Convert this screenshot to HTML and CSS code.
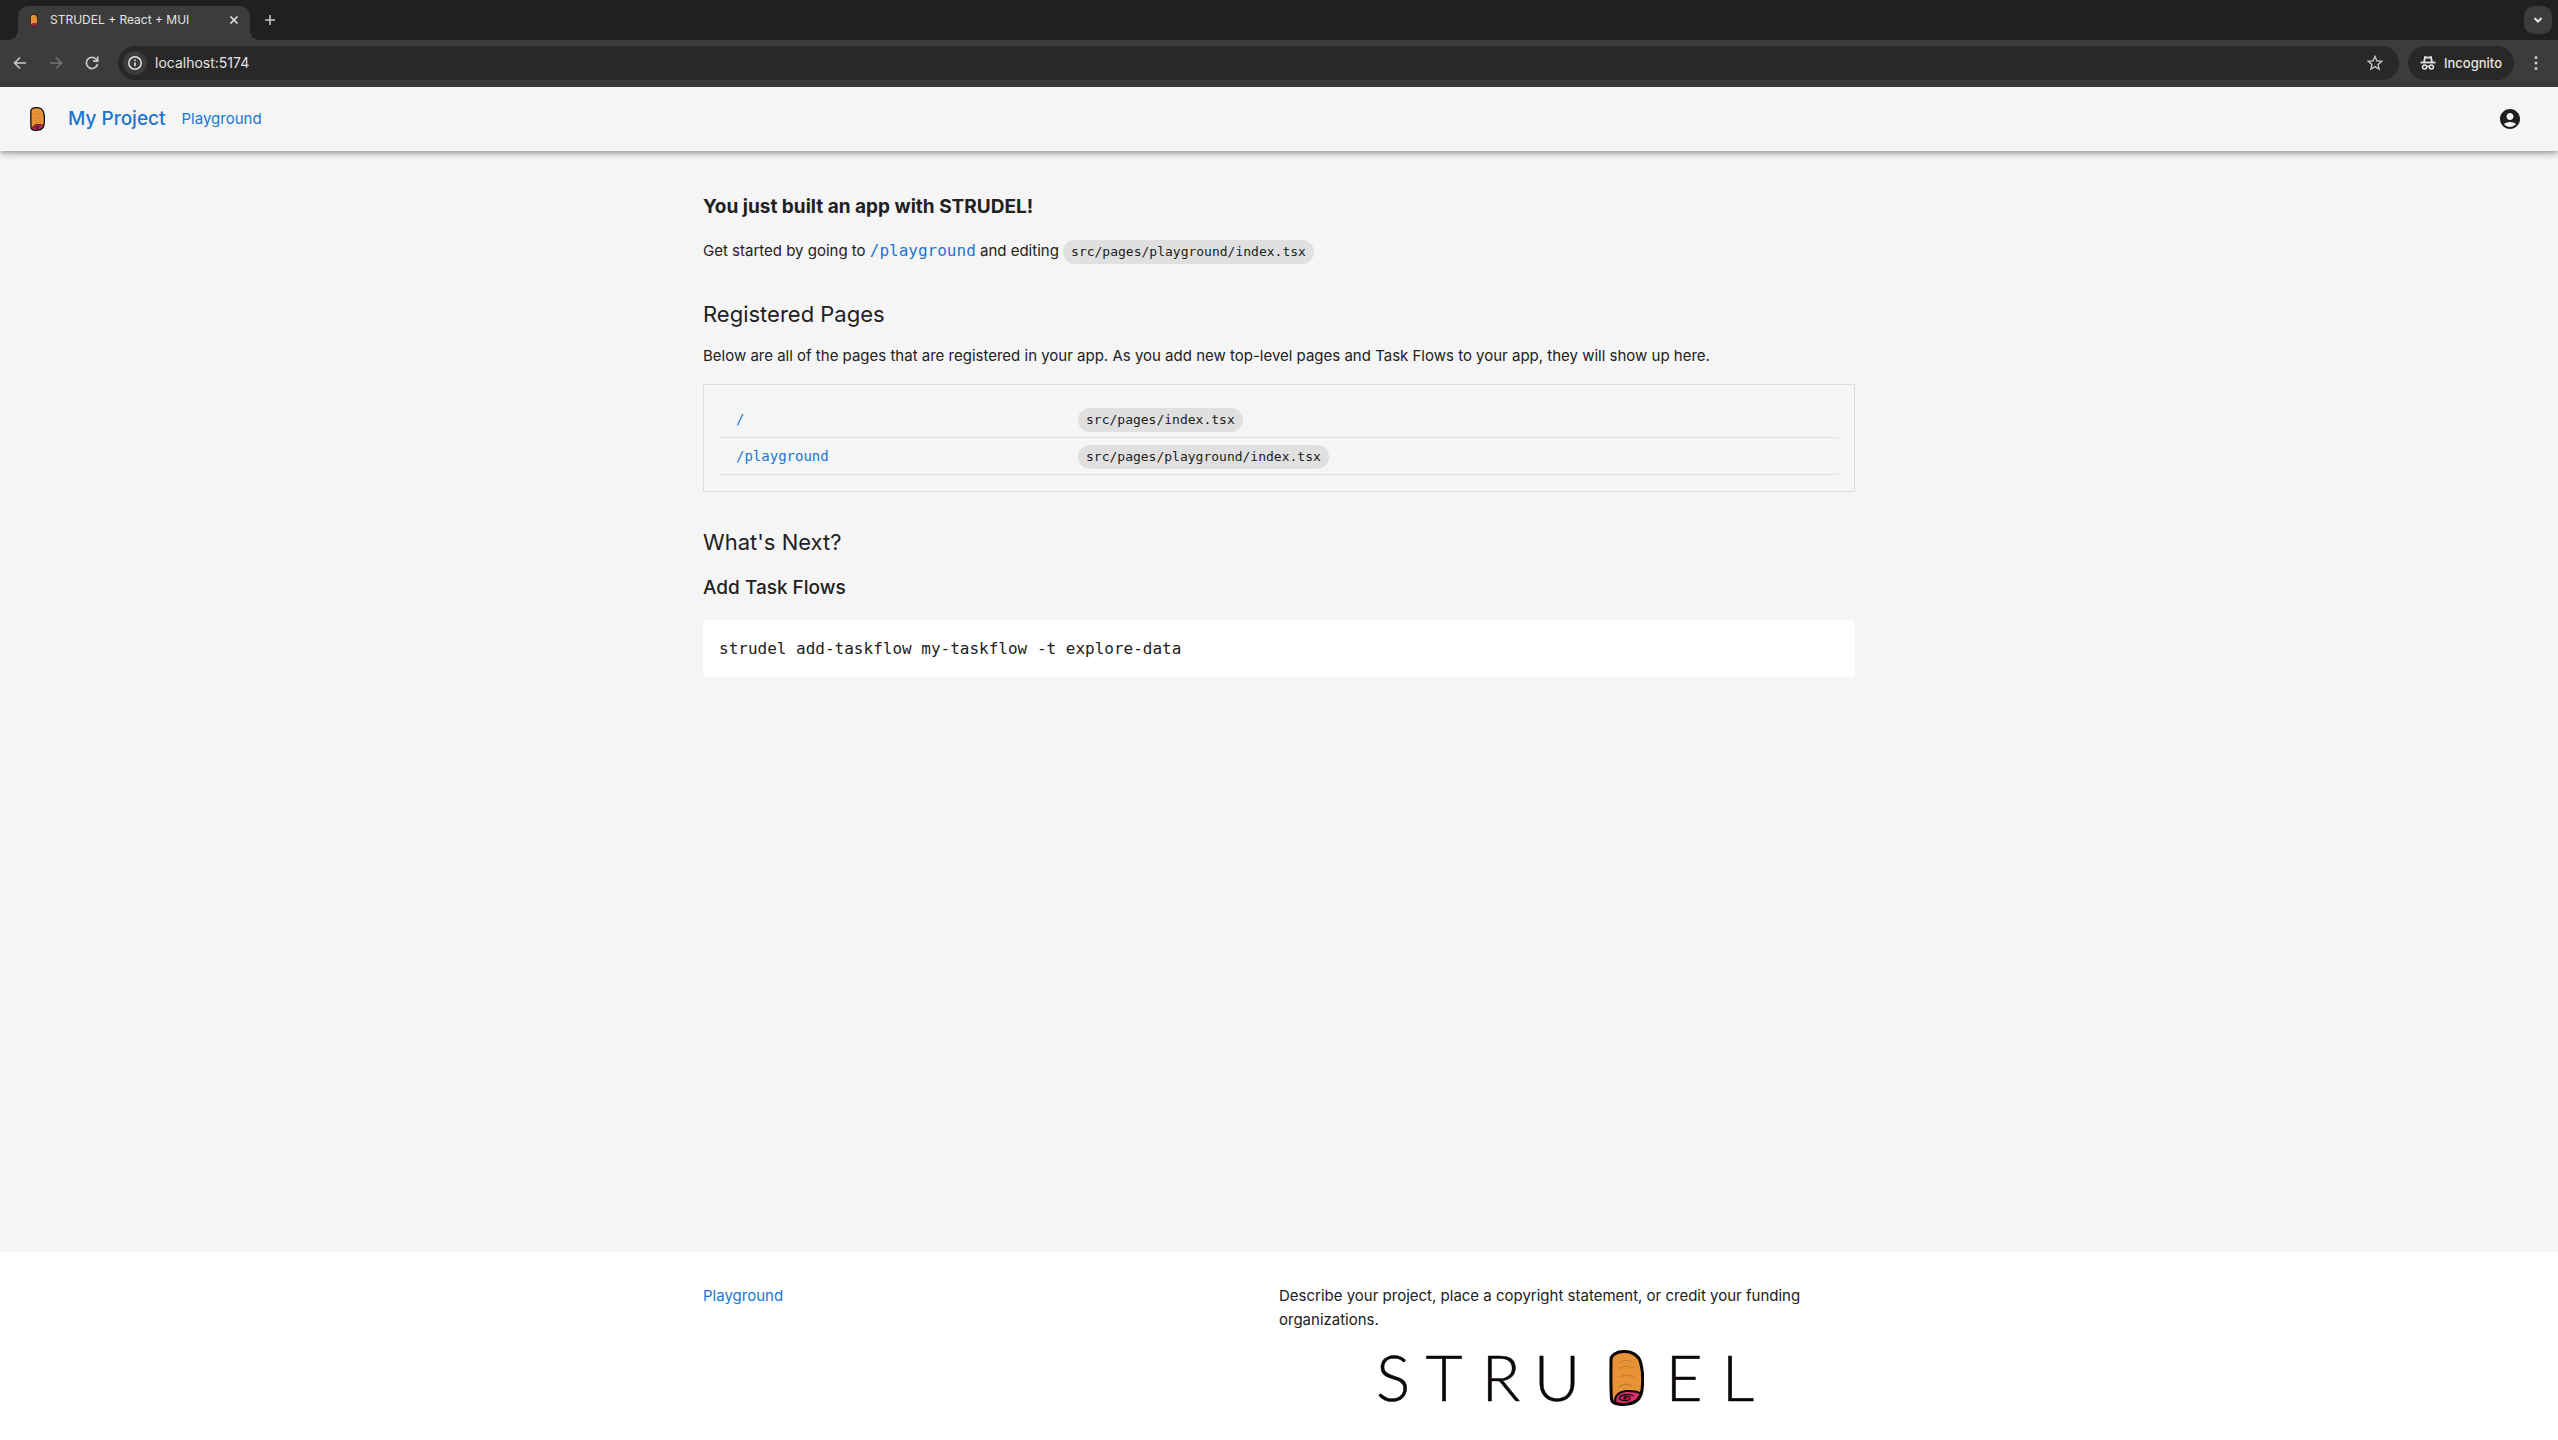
FILE: index.html
```html
<!DOCTYPE html>
<html lang="en">
<head>
<meta charset="utf-8">
<title>STRUDEL + React + MUI</title>
<link rel="stylesheet" href="styles.css">
</head>
<body>
<svg class="defs" width="0" height="0" aria-hidden="true">
  <symbol id="roll" viewBox="0 0 35 56">
    <path d="M2 10C1.500 5.500 7 1.800 14 1.500C23 1 29.500 5.500 31.500 12C34 21 34 32 33 40C32 48 27 53 19 54C11 55.500 3 53.500 2.500 49.500C1.500 36 2 22 2 10Z" fill="#e89236"/>
    <path d="M4 51C5 46 10 41.500 18 41.500C25 41.500 31 42 30 46C28 51 21 53.500 15 54C10 54 6 53.500 4 51Z" fill="#d92e6b"/>
    <path d="M2 10C1.500 5.500 7 1.800 14 1.500C23 1 29.500 5.500 31.500 12C34 21 34 32 33 40C32 48 27 53 19 54C11 55.500 3 53.500 2.500 49.500C1.500 36 2 22 2 10Z" fill="none" stroke="#0c0708" stroke-width="3"/>
    <path d="M6.500 52C5 46 10 41.500 17 41C24 40.600 30 42 31 43.500" fill="none" stroke="#0c0708" stroke-width="2"/>
    <path d="M24.500 46C21 43.500 11 44.500 10.500 48C10.500 51 20 51.500 21 48.500C21 46 14 46 15 48.500L17.500 48.500" fill="none" stroke="#0c0708" stroke-width="1.300"/>
    <path d="M11 12Q17 9 22 12M10 18Q17 15 25 18M11 27Q18 23 25 27M10 37Q16 32 23 36" fill="none" stroke="#c07a31" stroke-width="1.200"/>
  </symbol>
</svg>

<div class="tabstrip">
  <div class="tab">
    <svg class="favicon" width="8" height="13"><use href="#roll"/></svg>
    <span class="tab-title">STRUDEL + React + MUI</span>
    <button class="icon-btn" aria-label="Close tab"><svg width="10" height="10" viewBox="0 0 10 10"><path d="M1.500 1.500l7 7M8.500 1.500l-7 7" stroke="#e3e3e3" stroke-width="1.600"/></svg></button>
  </div>
  <button class="icon-btn new-tab" aria-label="New tab"><svg width="12" height="12" viewBox="0 0 12 12"><path d="M6 1v10M1 6h10" stroke="#c7c7c7" stroke-width="1.600"/></svg></button>
  <button class="icon-btn tab-search" aria-label="Search tabs"><svg width="10" height="8" viewBox="0 0 10 8"><path d="M1.500 2L5 5.500L8.500 2" fill="none" stroke="#e3e3e3" stroke-width="2"/></svg></button>
</div>

<div class="toolbar">
  <button class="icon-btn nav-btn" aria-label="Back"><svg width="16" height="16" viewBox="0 0 16 16"><path d="M14 8H3M8 2.500L2.500 8L8 13.500" fill="none" stroke="#c7c7c7" stroke-width="1.600"/></svg></button>
  <button class="icon-btn nav-btn" aria-label="Forward"><svg width="16" height="16" viewBox="0 0 16 16"><path d="M2 8h11M8 2.500L13.500 8L8 13.500" fill="none" stroke="#757575" stroke-width="1.600"/></svg></button>
  <button class="icon-btn nav-btn" aria-label="Reload"><svg width="16" height="16" viewBox="0 0 16 16"><path d="M13.500 9A5.600 5.600 0 1 1 12 4L13.500 5.600M13.700 1.500v4.700H9" fill="none" stroke="#c7c7c7" stroke-width="1.700"/></svg></button>
  <div class="address">
    <button class="icon-btn site-info" aria-label="Site information"><svg width="16" height="16" viewBox="0 0 16 16"><circle cx="8" cy="8" r="6.200" fill="none" stroke="#e3e3e3" stroke-width="1.500"/><path d="M8 7.200v4M8 4.500v1.500" stroke="#e3e3e3" stroke-width="1.500"/></svg></button>
    <input class="url" type="text" value="localhost:5174" aria-label="Address">
    <button class="icon-btn" aria-label="Bookmark"><svg width="20" height="20" viewBox="0 0 24 24"><path fill="#c7c7c7" d="M22 9.240l-7.190-.62L12 2 9.190 8.630 2 9.240l5.460 4.730L5.820 21 12 17.270 18.180 21l-1.630-7.030L22 9.240zM12 15.400l-3.760 2.270 1-4.280-3.320-2.880 4.380-.38L12 6.100l1.710 4.040 4.380.38-3.320 2.880 1 4.280L12 15.400z"/></svg></button>
  </div>
  <button class="incognito"><svg width="16" height="16" viewBox="0 0 16 16" fill="none" stroke="#e3e3e3"><path d="M.5 7.500h15" stroke-width="1.800"/><path d="M4 7L5 2.200Q8 3.200 11 2.200L12 7" stroke-width="1.800"/><circle cx="4.600" cy="12" r="2" stroke-width="1.600"/><circle cx="11.400" cy="12" r="2" stroke-width="1.600"/><path d="M6.600 11.600Q8 10.800 9.400 11.600" stroke-width="1.400"/></svg>Incognito</button>
  <button class="icon-btn menu-btn" aria-label="Menu"><svg width="4" height="16" viewBox="0 0 4 16" fill="#c7c7c7"><circle cx="2" cy="2.500" r="1.500"/><circle cx="2" cy="8" r="1.500"/><circle cx="2" cy="13.500" r="1.500"/></svg></button>
</div>

<header class="appbar">
  <svg class="app-logo" width="15" height="24"><use href="#roll"/></svg>
  <a class="brand" href="#">My Project</a>
  <a href="#">Playground</a>
  <button class="icon-btn account" aria-label="Account"><svg width="24" height="24" viewBox="0 0 24 24"><path fill="#1f1f1f" d="M12 2C6.480 2 2 6.480 2 12s4.480 10 10 10 10-4.480 10-10S17.520 2 12 2zm0 4c1.930 0 3.500 1.570 3.500 3.500S13.930 13 12 13s-3.500-1.570-3.500-3.500S10.070 6 12 6zm0 14c-2.030 0-4.430-.82-6.140-2.880C7.550 15.800 9.680 15 12 15s4.450.8 6.140 2.120C16.430 19.180 14.030 20 12 20z"/></svg></button>
</header>

<main class="container">
  <h1>You just built an app with STRUDEL!</h1>
  <p>Get started by going to <a class="mono" href="#">/playground</a> and editing <code class="chip">src/pages/playground/index.tsx</code></p>
  <h2>Registered Pages</h2>
  <p>Below are all of the pages that are registered in your app. As you add new top-level pages and Task Flows to your app, they will show up here.</p>
  <div class="panel">
    <table>
      <tr><td class="path"><a href="#">/</a></td><td><code class="chip">src/pages/index.tsx</code></td></tr>
      <tr><td class="path"><a href="#">/playground</a></td><td><code class="chip">src/pages/playground/index.tsx</code></td></tr>
    </table>
  </div>
  <h2>What's Next?</h2>
  <h3>Add Task Flows</h3>
  <pre class="command">strudel add-taskflow my-taskflow -t explore-data</pre>
</main>

<footer>
  <div class="container footer-grid">
    <div><a href="#">Playground</a></div>
    <div>
      <p>Describe your project, place a copyright statement, or credit your funding organizations.</p>
      <svg class="wordmark" width="380" height="92" viewBox="0 -18 380 92" role="img" aria-label="STRUDEL">
        <g class="wordmark-text" text-anchor="middle">
          <text x="16" y="51">S</text><text x="67" y="51">T</text><text x="124" y="51">R</text><text x="180" y="51">U</text><text x="307" y="51">E</text><text x="361" y="51">L</text>
        </g>
        <use href="#roll" x="232" y="0" width="35" height="56"/>
      </svg>
    </div>
  </div>
</footer>
</body>
</html>
```
FILE: styles.css
```css
* { box-sizing: border-box; }
body {
  margin: 0;
  min-height: 100vh;
  display: flex;
  flex-direction: column;
  background: #f5f5f5;
  color: #212121;
  font: 15px/24px Inter, "Liberation Sans", sans-serif;
}
.defs { position: absolute; }
a { color: #1976d2; text-decoration: none; }
h1, h2, h3, p, pre { margin: 0; }
button { font: inherit; color: inherit; border: 0; cursor: pointer; }
.icon-btn {
  display: flex;
  align-items: center;
  justify-content: center;
  padding: 0;
  background: none;
}

/* Browser frame */
.tabstrip {
  display: flex;
  align-items: center;
  height: 40px;
  padding: 0 6px 0 18px;
  background: #1f2120;
}
.tab {
  position: relative;
  display: flex;
  align-items: center;
  align-self: flex-end;
  width: 232px;
  height: 34px;
  padding: 0 11px 6px 12px;
  border-radius: 10px 10px 0 0;
  background: #3c3c3c;
  color: #e3e3e3;
  font-size: 12px;
}
.tab::before, .tab::after {
  content: "";
  position: absolute;
  bottom: 0;
  width: 10px;
  height: 10px;
}
.tab::before { left: -10px; background: radial-gradient(circle at 0 0, transparent 10px, #3c3c3c 10px); }
.tab::after { right: -10px; background: radial-gradient(circle at 100% 0, transparent 10px, #3c3c3c 10px); }
.tab-title { flex: 1; margin-left: 12px; }
.new-tab { margin-left: 14px; }
.tab-search {
  width: 28px;
  height: 28px;
  margin-left: auto;
  border-radius: 10px;
  background: #3c3c3c;
}
.toolbar {
  display: flex;
  align-items: center;
  height: 47px;
  padding: 0 20px 1px 12px;
  background: #3c3c3c;
}
.nav-btn { width: 16px; margin-right: 20px; }
.address {
  flex: 1;
  display: flex;
  align-items: center;
  height: 34px;
  margin: 0 9px 0 -2px;
  padding: 0 14px 0 5px;
  border-radius: 17px;
  background: #282828;
}
.site-info { width: 24px; height: 24px; border-radius: 12px; background: #3c3c3c; }
.url {
  flex: 1;
  padding: 0 8px;
  border: 0;
  background: none;
  color: #e3e3e3;
  font: 14px/20px Inter, "Liberation Sans", sans-serif;
}
.incognito {
  display: flex;
  align-items: center;
  gap: 8px;
  height: 34px;
  padding: 0 12px;
  border-radius: 17px;
  background: #282828;
  color: #e3e3e3;
  font-size: 13px;
  font-weight: 500;
}
.menu-btn { margin-left: 20px; }

/* Application */
.appbar {
  display: flex;
  align-items: center;
  height: 64px;
  padding: 0 36px 0 30px;
  box-shadow: 0 2px 4px -1px rgba(0,0,0,.2), 0 4px 5px rgba(0,0,0,.14), 0 1px 10px rgba(0,0,0,.12);
}
.brand { margin: 0 16px 0 23px; font-size: 19px; font-weight: 500; }
.account { margin-left: auto; }
.container { width: 100%; max-width: 1200px; margin: 0 auto; padding: 0 24px; }
main { flex: 1; }
h1 { margin-top: 40px; font-size: 19px; line-height: 32px; font-weight: 700; }
p { margin-top: 16px; }
h2 { margin-top: 32px; font-size: 22px; line-height: 36px; font-weight: 400; }
h3 { font-size: 19px; line-height: 32px; font-weight: 500; }
h2 + p, h2 + h3 { margin-top: 12px; }
.mono, .path, .command, .chip { font-family: "DejaVu Sans Mono", monospace; }
.mono { font-size: 16px; }
.chip {
  display: inline-block;
  padding: 0 8px;
  border-radius: 12px;
  background: #e0e0e0;
  font-size: 13px;
  line-height: 24px;
}
.panel { margin-top: 16px; padding: 16px; border: 1px solid #dcdcdc; }
table { width: 100%; border-collapse: separate; border-spacing: 0; table-layout: fixed; }
td { height: 37px; padding: 0 16px; border-bottom: 1px solid #e0e0e0; font-size: 14px; }
.path { width: 342px; }
.command {
  margin-top: 16px;
  padding: 16px;
  border-radius: 4px;
  background: #fff;
  font-size: 16px;
  line-height: 25px;
}
footer { padding: 32px 0 16px; background: #fff; }
.footer-grid { display: grid; grid-template-columns: 1fr 1fr; }
footer p { margin: 0; }
.wordmark { display: block; margin: 0 auto; }
.wordmark-text { font: 300 64px Lato, sans-serif; fill: #0c0708; stroke: #0c0708; stroke-width: .5; }
```
